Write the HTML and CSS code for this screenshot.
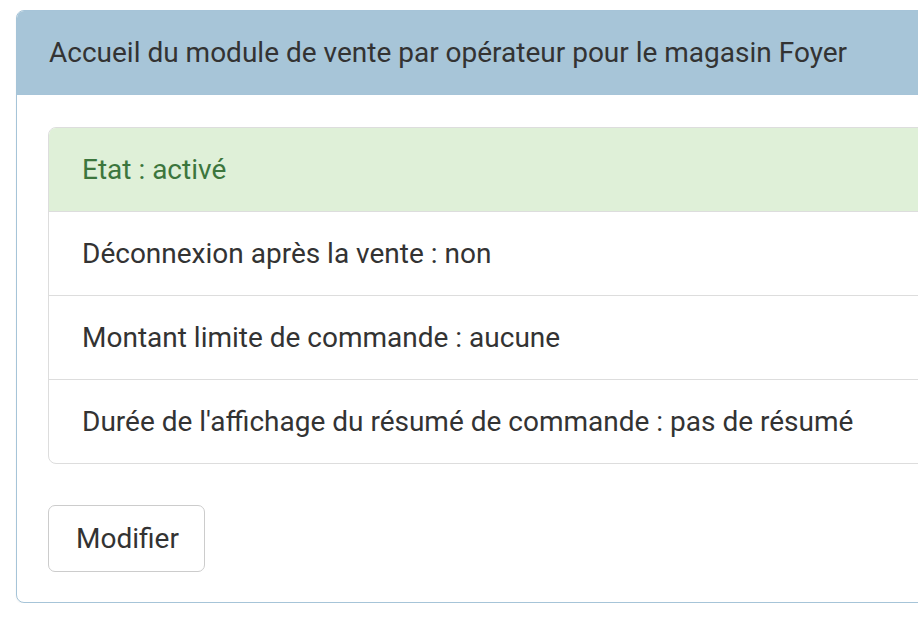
FILE: index.html
```html
<!DOCTYPE html>
<html lang="fr">
<head>
<meta charset="utf-8">
<title>Module de vente</title>
<link rel="stylesheet" href="styles.css">
</head>
<body>
<div class="page">
  <div class="panel">
    <div class="panel-heading">Accueil du module de vente par opérateur pour le magasin Foyer</div>
    <div class="panel-body">
      <ul class="list-group">
        <li class="list-group-item success">Etat : activé</li>
        <li class="list-group-item">Déconnexion après la vente : non</li>
        <li class="list-group-item">Montant limite de commande : aucune</li>
        <li class="list-group-item">Durée de l'affichage du résumé de commande : pas de résumé</li>
      </ul>
      <button class="btn" type="button">Modifier</button>
    </div>
  </div>
</div>
</body>
</html>
```
FILE: styles.css
```css
html, body {
  margin: 0;
  padding: 0;
  background: #fff;
  overflow: hidden;
}
body {
  font-family: Roboto, "Liberation Sans", Arial, sans-serif;
  color: #333;
  font-size: 28px;
}
.page {
  padding: 10px 0 0 16px;
  width: 1100px;
}
.panel {
  width: 1040px;
  border: 1px solid #a6c4d8;
  border-radius: 8px;
  background: #fff;
  box-shadow: 0 1px 2px rgba(0,0,0,0.05);
}
.panel-heading {
  background: #a7c5d8;
  border-bottom: 1px solid #a6c4d8;
  border-radius: 7px 7px 0 0;
  padding: 0 32px;
  height: 84px;
  line-height: 84px;
  font-size: 28px;
  color: #333;
  box-sizing: border-box;
}
.panel-body {
  padding: 32px 31px 30px 31px;
}
.list-group {
  list-style: none;
  margin: 0 0 41px 0;
  padding: 0;
  border: 1px solid #ddd;
  border-radius: 8px;
  overflow: hidden;
}
.list-group-item {
  padding: 21px 33px;
  line-height: 41px;
  border-bottom: 1px solid #ddd;
}
.list-group-item:last-child {
  border-bottom: 0;
}
.list-group-item.success {
  background: #dff0d8;
  color: #3c763d;
}
.btn {
  display: block;
  font-family: inherit;
  font-size: 28px;
  color: #333;
  background: #fff;
  border: 1px solid #ccc;
  border-radius: 7px;
  padding: 12px 25px 12px 27px;
  line-height: 41px;
  cursor: pointer;
}
```
